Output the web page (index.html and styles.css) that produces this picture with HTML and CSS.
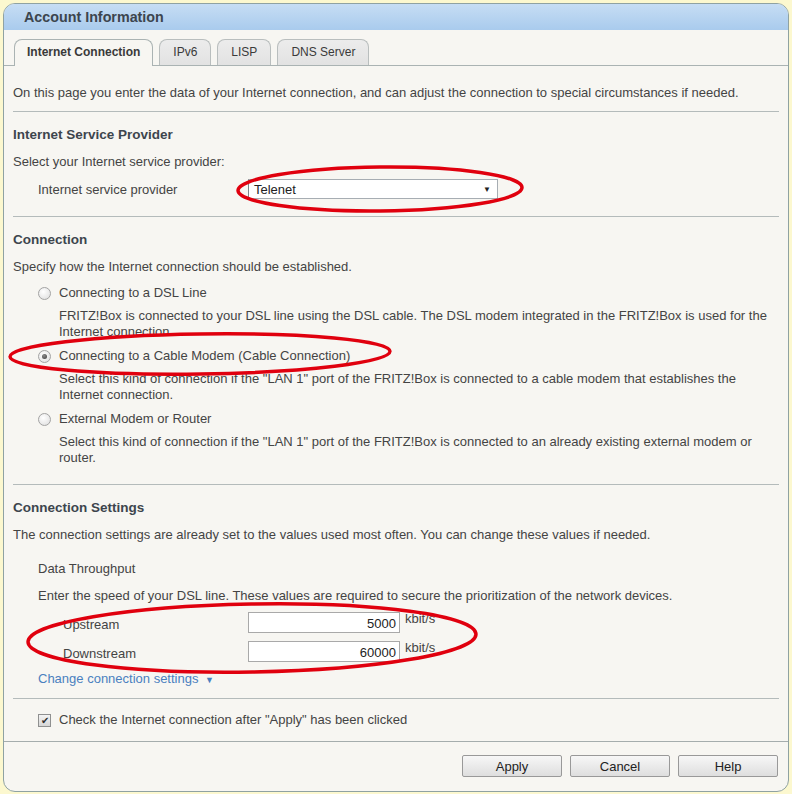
FILE: index.html
```html
<!DOCTYPE html>
<html lang="en">
<head>
    <meta charset="UTF-8">
    <title>Account Information</title>
    <link rel="stylesheet" href="styles.css">
</head>
<body>
    <div class="panel">
        <!-- Title bar -->
        <div class="panel-head">Account Information</div>

        <!-- Tabs -->
        <div class="tabs">
            <span class="tab active">Internet Connection</span>
            <span class="tab">IPv6</span>
            <span class="tab">LISP</span>
            <span class="tab">DNS Server</span>
        </div>

        <div class="content">
            <p class="intro">On this page you enter the data of your Internet connection, and can adjust the connection to special circumstances if needed.</p>
            <hr>

            <!-- Provider -->
            <h2>Internet Service Provider</h2>
            <p class="gap">Select your Internet service provider:</p>
            <div class="field-row">
                <label class="field-label">Internet service provider</label>
                <span class="select">Telenet</span>
            </div>
            <hr>

            <!-- Connection type -->
            <h2>Connection</h2>
            <p class="gap">Specify how the Internet connection should be established.</p>
            <div class="options">
                <div class="option first"><span class="radio"></span>Connecting to a DSL Line</div>
                <p class="desc">FRITZ!Box is connected to your DSL line using the DSL cable. The DSL modem integrated in the FRITZ!Box is used for the Internet connection.</p>
                <div class="option"><span class="radio checked"></span>Connecting to a Cable Modem (Cable Connection)</div>
                <p class="desc">Select this kind of connection if the "LAN 1" port of the FRITZ!Box is connected to a cable modem that establishes the Internet connection.</p>
                <div class="option"><span class="radio"></span>External Modem or Router</div>
                <p class="desc">Select this kind of connection if the "LAN 1" port of the FRITZ!Box is connected to an already existing external modem or router.</p>
            </div>
            <hr>

            <!-- Settings -->
            <h2>Connection Settings</h2>
            <p class="gap">The connection settings are already set to the values used most often. You can change these values if needed.</p>
            <div class="sub">Data Throughput</div>
            <p class="gap indent">Enter the speed of your DSL line. These values are required to secure the prioritization of the network devices.</p>
            <div class="speed-row first">
                <label class="speed-label">Upstream</label>
                <span class="num-input">5000</span>
                <span class="unit">kbit/s</span>
            </div>
            <div class="speed-row">
                <label class="speed-label">Downstream</label>
                <span class="num-input">60000</span>
                <span class="unit">kbit/s</span>
            </div>
            <a class="more-link" href="#">Change connection settings <span class="arrow">&#9660;</span></a>
            <hr class="tight">

            <div class="check-row"><span class="checkbox">&#10004;</span>Check the Internet connection after "Apply" has been clicked</div>
        </div>

        <!-- Buttons -->
        <div class="footer">
            <button class="btn">Apply</button>
            <button class="btn">Cancel</button>
            <button class="btn">Help</button>
        </div>

        <!-- Red marker annotations -->
        <svg class="marks" width="792" height="794" viewBox="0 0 792 794">
            <ellipse cx="380" cy="189" rx="142" ry="22" transform="rotate(-0.6 380 189)"/>
            <ellipse cx="200" cy="354" rx="190" ry="20" transform="rotate(-0.8 200 354)"/>
            <ellipse cx="252" cy="638" rx="224" ry="34" transform="rotate(-1 252 638)"/>
        </svg>
    </div>
</body>
</html>
```

FILE: styles.css
```css
/* Basic Styles */
body {
    margin: 0;
    font-family: "Liberation Sans", Arial, sans-serif;
    font-size: 13px;
    color: #444;
    background-color: #fcf8cf;
}

.panel {
    position: relative;
    margin: 3px 3px 0 3px;
    height: 789px;
    box-sizing: border-box;
    border: 1px solid #8fa2a2;
    border-radius: 12px;
    background-color: #f7f6f2;
}

/* Title bar */
.panel-head {
    height: 26px;
    line-height: 26px;
    padding-left: 20px;
    font-size: 14.3px;
    font-weight: bold;
    color: #3c454e;
    background: linear-gradient(#c6ddf4, #a9cbed);
    border-radius: 11px 11px 0 0;
}

/* Tabs */
.tabs {
    display: flex;
    gap: 6px;
    padding: 9px 10px 0 10px;
    border-bottom: 1px solid #aab3b3;
}

.tab {
    height: 25px;
    line-height: 25px;
    padding: 0 13px;
    font-size: 12px;
    color: #3a3a3a;
    border: 1px solid #b9bebe;
    border-bottom: none;
    border-radius: 8px 8px 0 0;
    background: linear-gradient(#ececec, #e2e2e2);
}

.tab.active {
    font-weight: bold;
    padding: 0 12px;
    background: #f7f6f2;
    border-color: #aab3b3;
    margin-bottom: -1px;
    height: 26px;
}

/* Content */
.content {
    padding: 19px 9px 13px 9px;
}

p {
    margin: 0;
    line-height: 16px;
}

hr {
    border: 0;
    border-top: 1px solid #b4bbbb;
    margin: 10px 0 15px 0;
}

hr.tight {
    margin: 10px 0 13px 0;
}

h2 {
    margin: 0;
    font-size: 13.5px;
    line-height: 16px;
    color: #3d454d;
}

.gap {
    margin-top: 11px;
}

.indent {
    padding-left: 25px;
}

/* Provider row */
.field-row {
    display: flex;
    align-items: center;
    margin: 9px 0 17px 0;
    padding-left: 25px;
}

.field-label {
    width: 210px;
}

.select {
    position: relative;
    width: 250px;
    height: 20px;
    line-height: 20px;
    box-sizing: border-box;
    padding-left: 5px;
    border: 1px solid #a7adb3;
    border-left-color: #7e8489;
    background: #fff;
    color: #222;
}

.select::after {
    content: "\25BC";
    position: absolute;
    right: 6px;
    top: 0;
    font-size: 8px;
    color: #222;
}

/* Radio options */
.options {
    margin-bottom: 18px;
}

.option {
    display: flex;
    align-items: center;
    line-height: 16px;
    margin-top: 8px;
    padding-left: 25px;
}

.option.first {
    margin-top: 10px;
}

.radio {
    width: 11px;
    height: 11px;
    margin-right: 8px;
    border: 1px solid #a3a3a3;
    border-radius: 50%;
    background: radial-gradient(circle at 40% 35%, #fff, #dcdcdc);
    position: relative;
}

.radio.checked::after {
    content: "";
    position: absolute;
    left: 3px;
    top: 3px;
    width: 5px;
    height: 5px;
    border-radius: 50%;
    background: radial-gradient(circle at 40% 35%, #8a8a8a, #3c3c3c);
}

.desc {
    margin-top: 7px;
    padding-left: 46px;
}

/* Throughput */
.sub {
    margin-top: 18px;
    padding-left: 25px;
    line-height: 16px;
}

.speed-row {
    display: flex;
    margin-top: 6px;
    padding-left: 50px;
}

.speed-row.first {
    margin-top: 8px;
}

.speed-label {
    width: 185px;
    line-height: 21px;
    padding-top: 2px;
}

.num-input {
    width: 152px;
    height: 21px;
    line-height: 21px;
    box-sizing: border-box;
    padding-right: 3px;
    text-align: right;
    border: 1px solid #a9a9a9;
    background: #fff;
    color: #222;
}

.unit {
    margin-left: 5px;
    line-height: 13px;
}

.more-link {
    display: block;
    margin-top: 7px;
    padding-left: 25px;
    line-height: 16px;
    color: #4a80bf;
    text-decoration: none;
}

.more-link .arrow {
    font-size: 9px;
    margin-left: 3px;
}

/* Checkbox */
.check-row {
    display: flex;
    align-items: center;
    line-height: 16px;
    padding-left: 25px;
}

.checkbox {
    width: 11px;
    height: 11px;
    margin-right: 8px;
    border: 1px solid #8f9090;
    background: linear-gradient(#f4f4f4, #d6d6d6);
    font-size: 10px;
    line-height: 11px;
    text-align: center;
    color: #2e2e2e;
}

/* Footer buttons */
.footer {
    display: flex;
    justify-content: flex-end;
    gap: 8px;
    padding: 13px 10px 0 0;
    border-top: 1px solid #a5adad;
}

.btn {
    width: 100px;
    height: 22px;
    font-family: "Liberation Sans", Arial, sans-serif;
    font-size: 13px;
    color: #222;
    border: 1px solid #999;
    border-radius: 2px;
    background: linear-gradient(#f7f7f7, #dedede);
}

/* Annotation overlay */
.marks {
    position: absolute;
    left: -4px;
    top: -4px;
    pointer-events: none;
}

.marks ellipse {
    fill: none;
    stroke: #e0000e;
    stroke-width: 3.5;
}
```
